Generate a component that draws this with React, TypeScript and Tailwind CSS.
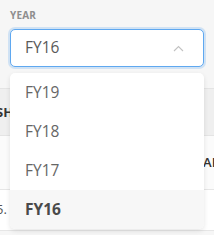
import React from "react";

const years = ["FY19", "FY18", "FY17", "FY16"];

function ChevronUp() {
  return (
    <svg width="11" height="7" viewBox="0 0 11 7" fill="none">
      <path d="M1 6L5.5 1.5L10 6" stroke="#c2c2c2" strokeWidth="1.1" />
    </svg>
  );
}

export default function App() {
  const selected = "FY16";

  return (
    <div
      className="relative w-[214px] h-[235px] overflow-hidden bg-[#f6f6f6]"
      style={{ fontFamily: '"Open Sans", "Noto Sans", sans-serif' }}
    >
      {/* Label */}
      <div className="pl-[10px] pt-[8px] text-[10px] font-bold uppercase tracking-[0.02em] text-[#8e8e8e] leading-[14px]">
        Year
      </div>

      {/* Select */}
      <div className="mx-[10px] mt-[7px] h-[38px] w-[194px] rounded-[5px] border border-[#5fa8f0] bg-white shadow-[0_0_0_2px_rgba(95,168,240,0.25)] flex items-center justify-between pl-[14px] pr-[19px]">
        <span className="text-[15.5px] text-[#5a5a5a]">FY16</span>
        <ChevronUp />
      </div>

      {/* Table behind */}
      <div className="mt-[21px] text-[13px] font-bold text-[#333]">
        <div className="h-[48px] bg-[#efefef] border-y border-[#e4e4e4] flex items-center">
          <span className="-ml-[4px] pt-[2px]">SH</span>
        </div>
        <div className="h-[54px] bg-[#fbfbfb] border-b border-[#e6e6e6] flex items-center justify-end">
          <span className="-mr-[6px] font-semibold">AR</span>
        </div>
        <div className="h-[41px] bg-white border-b border-[#e6e6e6] flex items-center">
          <span className="-ml-[4px] font-normal text-[#555]">5.</span>
        </div>
      </div>

      {/* Dropdown menu */}
      <div className="absolute left-[10px] top-[73px] w-[194px] rounded-[5px] bg-white shadow-[0_2px_5px_rgba(0,0,0,0.1)] overflow-hidden">
        {years.map((y) => (
          <div
            key={y}
            className={
              y === selected
                ? "h-[39px] flex items-center pl-[15px] text-[15.5px] font-bold text-[#4a4a4a] bg-[#f7f7f7]"
                : "h-[39px] flex items-center pl-[15px] text-[15.5px] text-[#666]"
            }
          >
            {y}
          </div>
        ))}
      </div>
    </div>
  );
}
